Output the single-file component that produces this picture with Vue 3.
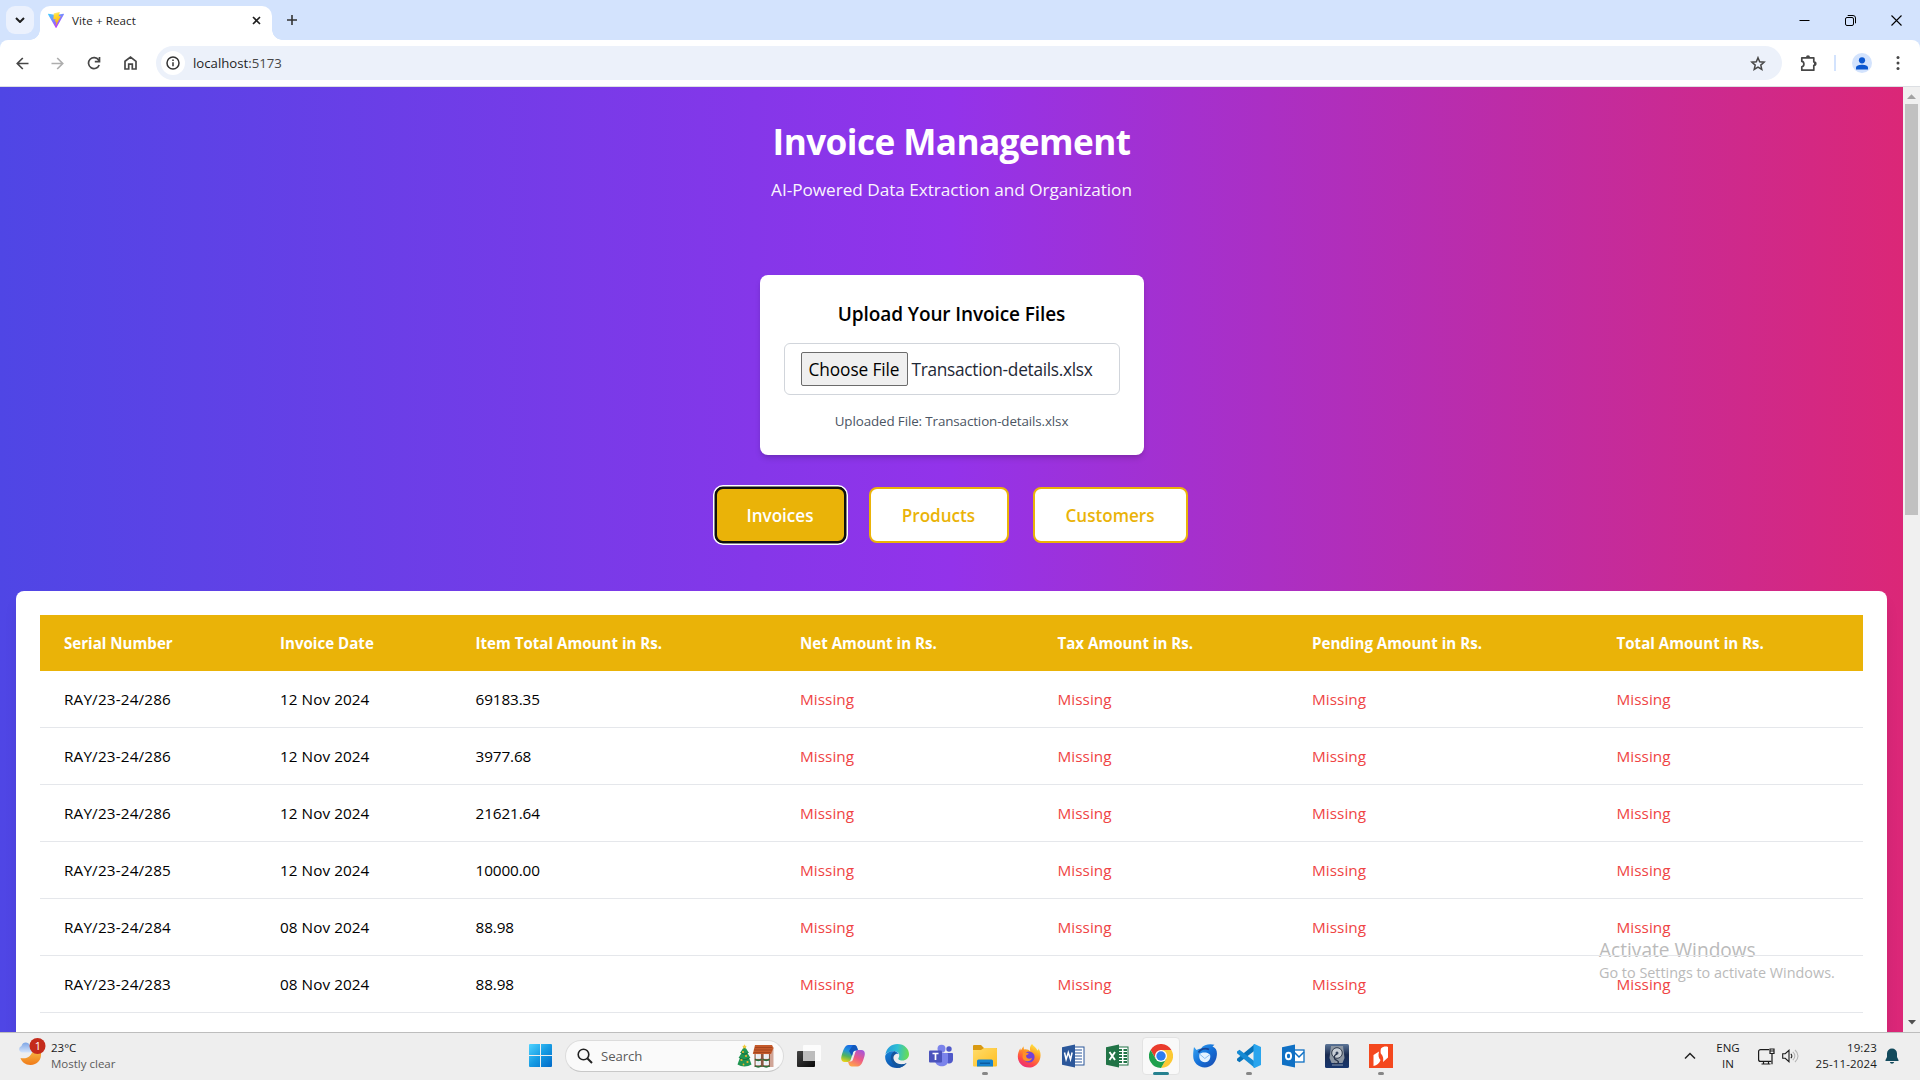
<script setup>
const columns = [
  { label: 'Serial Number', width: 216 },
  { label: 'Invoice Date', width: 195.5 },
  { label: 'Item Total Amount in Rs.', width: 324.5 },
  { label: 'Net Amount in Rs.', width: 257.5 },
  { label: 'Tax Amount in Rs.', width: 254.5 },
  { label: 'Pending Amount in Rs.', width: 304.5 },
  { label: 'Total Amount in Rs.', width: 270.5 },
]
const rows = [
  ['RAY/23-24/286', '12 Nov 2024', '69183.35'],
  ['RAY/23-24/286', '12 Nov 2024', '3977.68'],
  ['RAY/23-24/286', '12 Nov 2024', '21621.64'],
  ['RAY/23-24/285', '12 Nov 2024', '10000.00'],
  ['RAY/23-24/284', '08 Nov 2024', '88.98'],
  ['RAY/23-24/283', '08 Nov 2024', '88.98'],
]
</script>

<template>
  <div class="desktop">
    <header class="tabstrip">
      <div class="tab-search">
        <svg width="10" height="6" viewBox="0 0 10 6"><path d="M1 1l4 4 4-4" fill="none" stroke="#1f1f1f" stroke-width="2" /></svg>
      </div>
      <div class="tab">
        <svg class="favicon" width="16" height="16" viewBox="0 0 16 16">
          <defs>
            <linearGradient id="vite-a" x1="0" y1="0" x2=".6" y2="1"><stop offset="0" stop-color="#41d1ff" /><stop offset="1" stop-color="#bd34fe" /></linearGradient>
            <linearGradient id="vite-b" x1=".4" y1="0" x2=".6" y2="1"><stop offset="0" stop-color="#ffea83" /><stop offset=".2" stop-color="#ffdd35" /><stop offset="1" stop-color="#ffa800" /></linearGradient>
          </defs>
          <path d="M15.9 2.4 8.4 15.7a.4.4 0 0 1-.7 0L.1 2.4a.4.4 0 0 1 .4-.6L8 3.1l7.4-1.3a.4.4 0 0 1 .5.6z" fill="url(#vite-a)" />
          <path d="M11.5.1 6 1.2a.2.2 0 0 0-.2.2l-.4 5.8c0 .1.1.2.3.2l1.5-.3c.2 0 .3.1.3.2L7 9.5c0 .2.1.3.2.3l1-.3c.1 0 .3.1.2.3l-.7 3.5c0 .2.2.3.3.1l4.7-9.2c.1-.1-.1-.3-.2-.3l-1.6.3c-.2 0-.3-.1-.2-.2l1-3.6c.1-.2 0-.3-.2-.3z" fill="url(#vite-b)" />
        </svg>
        <span class="tab-title">Vite + React</span>
        <svg class="tab-close" width="9" height="9" viewBox="0 0 9 9"><path d="M1 1l7 7M8 1L1 8" stroke="#1f1f1f" stroke-width="1.6" /></svg>
      </div>
      <svg class="new-tab" width="12" height="12" viewBox="0 0 12 12"><path d="M6 1v10M1 6h10" stroke="#333" stroke-width="1.6" /></svg>
      <div class="window-buttons">
        <svg width="11" height="11" viewBox="0 0 11 11"><path d="M.5 5.5h10" stroke="#000" /></svg>
        <svg width="11" height="11" viewBox="0 0 11 11" fill="none" stroke="#000"><rect x=".5" y="2.5" width="8" height="8" rx="1.5" /><path d="M2.7.5H8a2.5 2.5 0 0 1 2.5 2.5v5.3" /></svg>
        <svg width="11" height="11" viewBox="0 0 11 11"><path d="M.5.5l10 10M10.500.5l-10 10" stroke="#000" stroke-width="1.1" /></svg>
      </div>
    </header>

    <div class="toolbar-wrap">
      <div class="toolbar">
        <svg class="nav back" width="13" height="13" viewBox="0 0 13 13" fill="none" stroke="#474747" stroke-width="1.7"><path d="M12.500 6.500H1.500M6.800 1L1.300 6.500l5.500 5.500" /></svg>
        <svg class="nav forward" width="13" height="13" viewBox="0 0 13 13" fill="none" stroke="#aeaeae" stroke-width="1.7"><path d="M.5 6.500h11M6.200 1l5.500 5.500L6.200 12" /></svg>
        <svg class="nav reload" width="14" height="14" viewBox="0 0 14 14" fill="none" stroke="#474747" stroke-width="1.7"><path d="M12.200 9A5.500 5.500 0 1 1 11.600 4l.8 1.200M12.500 1v4.700H7.800" /></svg>
        <svg class="nav home" width="13" height="14" viewBox="0 0 13 14" fill="none" stroke="#474747" stroke-width="1.700"><path d="M1 5.300L6.500 1.100 12 5.300V13H8.300V8.200H4.700V13H1z" /></svg>
        <div class="address">
          <span class="site-info">
            <svg width="14" height="14" viewBox="0 0 14 14" fill="none" stroke="#333" stroke-width="1.500"><circle cx="7" cy="7" r="6" /><path d="M7 6.200v4M7 3.600v1.500" /></svg>
          </span>
          <span class="url">localhost<i>:5173</i></span>
          <svg class="star" width="16" height="15" viewBox="0 0 16 15"><path d="M8 1.700l1.700 4.100 4.400.4-3.300 2.900 1 4.300L8 11.100l-3.800 2.300 1-4.300-3.300-2.900 4.400-.4z" fill="none" stroke="#474747" stroke-width="1.500" /></svg>
        </div>
        <svg class="puzzle" width="17" height="17" viewBox="0 0 17 17"><path d="M1.800 2.800h12V7c2.600-.2 2.600 3.600 0 3.400v4.800h-12v-3.400c2.800-.4 2.800-5 0-5.400z" fill="none" stroke="#474747" stroke-width="1.700" stroke-linejoin="round" /><path d="M6 2.300a2 2 0 0 1 4 0zM14 6.900a1.900 1.900 0 0 1 0 3.800z" fill="#474747" /></svg>
        <span class="separator"></span>
        <span class="avatar">
          <svg width="12" height="13" viewBox="0 0 12 13" fill="#0b57d0"><circle cx="6" cy="3.300" r="3.100" /><path d="M0 12.500v-1.900C0 8.500 3.500 7.700 6 7.700s6 .8 6 2.900v1.900z" /></svg>
        </span>
        <svg class="kebab" width="4" height="14" viewBox="0 0 4 14" fill="#474747"><circle cx="2" cy="1.600" r="1.500" /><circle cx="2" cy="7" r="1.500" /><circle cx="2" cy="12.400" r="1.500" /></svg>
      </div>
    </div>

    <div class="viewport">
      <main class="page">
        <h1>Invoice Management</h1>
        <p class="tagline">AI-Powered Data Extraction and Organization</p>

        <section class="upload">
          <h2>Upload Your Invoice Files</h2>
          <div class="file-field">
            <span class="choose">Choose File</span>
            <span class="filename">Transaction-details.xlsx</span>
          </div>
          <p class="uploaded">Uploaded File: Transaction-details.xlsx</p>
        </section>

        <nav class="views">
          <button class="view active">Invoices</button>
          <button class="view products">Products</button>
          <button class="view customers">Customers</button>
        </nav>

        <section class="panel">
          <table>
            <colgroup><col v-for="c in columns" :key="c.label" :style="{ width: c.width + 'px' }"></colgroup>
            <thead>
              <tr><th v-for="c in columns" :key="c.label">{{ c.label }}</th></tr>
            </thead>
            <tbody>
              <tr v-for="(r, i) in rows" :key="i">
                <td class="serial">{{ r[0] }}</td>
                <td class="date">{{ r[1] }}</td>
                <td class="amount">{{ r[2] }}</td>
                <td v-for="n in 4" :key="n" class="missing">Missing</td>
              </tr>
            </tbody>
          </table>
          <div class="watermark">
            <div class="wm-title">Activate Windows</div>
            <div class="wm-text">Go to Settings to activate Windows.</div>
          </div>
        </section>
      </main>
      <div class="scrollbar">
        <svg width="9" height="5" viewBox="0 0 9 5"><path d="M0 5l4.500-4.700L9 5z" fill="#a3a3a3" /></svg>
        <div class="thumb"></div>
        <svg class="down" width="8" height="5" viewBox="0 0 8 5"><path d="M0 0h8L4 4.500z" fill="#505050" /></svg>
      </div>
    </div>

    <footer class="taskbar">
      <div class="weather">
        <svg width="28" height="28" viewBox="0 0 28 28">
          <defs>
            <linearGradient id="moon" x1="0" y1="0" x2="0" y2="1"><stop offset="0" stop-color="#f7c04a" /><stop offset="1" stop-color="#f07a18" /></linearGradient>
            <linearGradient id="cloud" x1="0" y1="0" x2="0" y2="1"><stop offset="0" stop-color="#7ea6e6" /><stop offset="1" stop-color="#d5e4fa" /></linearGradient>
          </defs>
          <path d="M2.500 20C9 21.500 14 18 15 11l8 3c1 8-4 13-10.500 13-5 0-8.800-3-10-7z" fill="url(#moon)" />
          <path d="M3.500 14.500a3.400 3.400 0 0 1 0-6.500c1-4.500 7-4.500 8.500-.5 2 1 3 3 2.500 7z" fill="url(#cloud)" />
          <circle cx="19.500" cy="8" r="8" fill="#c42b1c" />
          <text x="20" y="12.200" class="badge-text" text-anchor="middle">1</text>
        </svg>
        <div class="weather-text"><span>23°C</span><span class="dim">Mostly clear</span></div>
      </div>

      <div class="apps">
        <svg class="start" width="24" height="24" viewBox="0 0 24 24">
          <defs><linearGradient id="win" x1="0" y1="0" x2="1" y2="1"><stop offset="0" stop-color="#4fd3ff" /><stop offset=".5" stop-color="#169be3" /><stop offset="1" stop-color="#0069c8" /></linearGradient></defs>
          <path d="M1 0H11V11H0V1a1 1 0 0 1 1-1zM12 0h10a1 1 0 0 1 1 1v10h-11zM0 12h11v11h-10a1 1 0 0 1-1-1zM12 12h11v10a1 1 0 0 1-1 1h-10z" fill="url(#win)" />
        </svg>
        <div class="search">
          <svg width="16" height="16" viewBox="0 0 16 16" fill="none" stroke="#222" stroke-width="1.600"><circle cx="6.500" cy="6.500" r="5.300" /><path d="M10.500 10.500l4.500 4.500" stroke-width="2" /></svg>
          <span>Search</span>
          <svg class="holiday" width="38" height="24" viewBox="0 0 38 24">
            <path d="M6 18h3v4H6z" fill="#7a4828" />
            <path d="M7.500 2l4.500 7h-1.500l3 5h-1.300l2.300 6.500c-4 2.500-10 2.500-14 0L2.800 14H1.500l3-5H3z" fill="#219653" />
            <path d="M4.500 9c2 1.500 4 1.500 6 0M2.800 14c3 2 6.500 2 9.400 0" stroke="#12693c" fill="none" />
            <path d="M7.500.2l.7 1.500 1.700.2-1.200 1.200.3 1.600-1.500-.8-1.500.8.300-1.600L5.100 1.900l1.700-.2z" fill="#f3c93b" />
            <g fill="#f4b52f"><circle cx="6" cy="8" r="1" /><circle cx="9" cy="12" r="1.100" /><circle cx="4.500" cy="16" r="1.100" /><circle cx="10.500" cy="18" r="1.100" /><circle cx="6.500" cy="20.500" r=".9" /></g>
            <path d="M17.500 9H35l1 13-2 1H17.500z" fill="#8b5642" />
            <path d="M33 9l3.500-6v20H33z" fill="#d0a597" />
            <path d="M18 1h17l1.500 3-2.500 6H15.800z" fill="#c55a2b" />
            <path d="M18 3.500h17M17 6h18M16.500 8.500h17" stroke="#963c18" stroke-width=".7" />
            <g fill="#e6edf6" stroke="#fff" stroke-width=".7"><rect x="19" y="10.500" width="4.500" height="4" /><rect x="27" y="10.500" width="4.500" height="4" /><rect x="19" y="17" width="4.500" height="4" /><rect x="27" y="17" width="4.500" height="4" /></g>
            <path d="M18 15.300c2 1.500 4.500 1.500 6.500 0M26 15.300c2 1.500 4.500 1.500 6.500 0M18 21.800c2 1.500 4.500 1.500 6.500 0M26 21.800c2 1.500 4.500 1.500 6.500 0" stroke="#28713c" stroke-width="1.300" fill="none" />
          </svg>
        </div>

        <div class="app">
          <svg width="24" height="24" viewBox="0 0 24 24">
            <defs><linearGradient id="tv" x1="0" y1="0" x2="1" y2="1"><stop offset="0" stop-color="#444" /><stop offset="1" stop-color="#090909" /></linearGradient></defs>
            <rect x="0" y="7" width="18" height="16" rx="1" fill="url(#tv)" /><rect x="6" y="1" width="18" height="16" rx="1" fill="#fff" fill-opacity=".82" /><path d="M6 7h12v10H6z" fill="#bdbdbd" />
          </svg>
        </div>
        <div class="app">
          <svg width="24" height="24" viewBox="0 0 24 24">
            <defs>
              <linearGradient id="cp-a" x1=".5" y1="0" x2=".2" y2="1"><stop offset="0" stop-color="#1768e6" /><stop offset=".35" stop-color="#2294d8" /><stop offset=".65" stop-color="#52b45c" /><stop offset="1" stop-color="#f1d513" /></linearGradient>
              <linearGradient id="cp-b" x1=".8" y1="0" x2=".3" y2="1"><stop offset="0" stop-color="#a456dc" /><stop offset=".5" stop-color="#ed5a86" /><stop offset="1" stop-color="#ffa34b" /></linearGradient>
            </defs>
            <path d="M17 6.500l-1-3.200A3 3 0 0 0 13 1H7.500C3.500 1 2 7 .5 12c-1 4 .5 6 3 6h3.300c1.500 0 2.500-1 3-2.500L12 8.500c.5-1.500 1.500-2 3-2z" fill="url(#cp-a)" />
            <path d="M12 1h1c1.500 0 2.600 1 3 2.300l1 3.200h-2c-1.500 0-2.500.5-3 2l-1 3.500-3-5z" fill="#1258bb" />
            <path d="M7 17.500l1 3.200A3 3 0 0 0 11 22.500h5.500c4 0 5.500-5.500 7-10.500 1-4-.5-6-3-6h-3.300c-1.500 0-2.500 1-3 2.500L12 15.500c-.5 1.500-1.500 2-3 2z" fill="url(#cp-b)" />
          </svg>
        </div>
        <div class="app">
          <svg width="24" height="24" viewBox="0 0 24 24">
            <defs>
              <linearGradient id="ed-a" x1="0" y1=".3" x2="1" y2=".4"><stop offset="0" stop-color="#2499dc" /><stop offset=".5" stop-color="#2ebfd3" /><stop offset="1" stop-color="#6bdd51" /></linearGradient>
              <linearGradient id="ed-b" x1="0" y1="0" x2=".5" y2="1"><stop offset="0" stop-color="#1683da" /><stop offset="1" stop-color="#0c4ea7" /></linearGradient>
            </defs>
            <path d="M.4 10.500C1.500 4 6.500 0 12.300 0 19.500 0 24 5 24 10c0 4-3 6.500-6.600 6.500-3.500 0-4.500-1.300-4-2.200 2.200-3.300.2-7-3.900-7C5 7.300 1.500 9 .4 10.500z" fill="url(#ed-a)" />
            <path d="M.2 12C1 8.500 5.500 6.800 9.500 7.300c2 .2 3.800 1.500 4.200 3-5-2-7.500 3-4.700 7 3.200 4.200 9 4.200 12.700 1.700C19 22.500 15.500 24 12 24 5 24-.4 18.500.2 12z" fill="url(#ed-b)" />
            <path d="M9.500 7.300C5.600 9.500 5 14 7 18c1.600 3.300 4.500 5 7.300 5.700 3-.6 5.500-2.500 7.400-4.700-4.200 2.200-9.700 1.500-12.200-2-2-2.800-1-6.400 2-7.200z" fill="#15569c" />
          </svg>
        </div>
        <div class="app">
          <svg width="24" height="24" viewBox="0 0 24 24">
            <circle cx="20" cy="5" r="2.700" fill="#5059c9" /><path d="M17 9h6a1 1 0 0 1 1 1v5.500c0 5-6 5-7 2z" fill="#5059c9" />
            <circle cx="12.500" cy="4.800" r="4" fill="#7b83eb" /><path d="M7 9h11a1 1 0 0 1 1 1v7c0 7-12 7-13 0z" fill="#7b83eb" />
            <rect y="6.500" width="13" height="12" rx="1" fill="#4b53bc" /><path d="M3.500 9.500h6M6.500 9.500v6.500" stroke="#fff" stroke-width="1.700" />
          </svg>
        </div>
        <div class="app running">
          <svg width="24" height="24" viewBox="0 0 24 24">
            <defs><linearGradient id="fold" x1="0" y1="0" x2="1" y2="1"><stop offset="0" stop-color="#ffdc6a" /><stop offset="1" stop-color="#ffbe22" /></linearGradient></defs>
            <path d="M0 2a1 1 0 0 1 1-1h7l3 3h12a1 1 0 0 1 1 1v8H0z" fill="#d99a12" /><path d="M0 6h8l3-2h12a1 1 0 0 1 1 1v16.500a1 1 0 0 1-1 1H1a1 1 0 0 1-1-1z" fill="url(#fold)" /><path d="M4 22.500V17a1.500 1.500 0 0 1 1.500-1.500h13A1.500 1.500 0 0 1 20 17v5.500z" fill="#1582cf" /><path d="M7 18.500h10v1.500H7z" fill="#0a5ba0" />
          </svg>
        </div>
        <div class="app">
          <svg width="24" height="24" viewBox="0 0 24 24">
            <defs>
              <linearGradient id="ff" x1=".8" y1="0" x2=".3" y2="1"><stop offset="0" stop-color="#fff044" /><stop offset=".4" stop-color="#ff9a24" /><stop offset=".75" stop-color="#ff4a48" /><stop offset="1" stop-color="#e92b7c" /></linearGradient>
            </defs>
            <path d="M15 0c2 2.500 4 3.500 5.500 6.500 1-.5 1-1.500.8-2.200 2.200 3 2.700 6 2 9.500C22 20 17.500 23.600 12 23.600 5.500 23.600.8 18.500.8 12.500c0-3 1-5.700 2.500-8.200l.5 2.200L6.500 2.200 7 5.500c2.500-.6 5 .3 6.300 1.800C12.500 4.500 13 2 15 0z" fill="url(#ff)" />
            <circle cx="12" cy="13" r="5.600" fill="#7541d7" /><path d="M6 8c2.500 0 4 .5 6 1.700L9 11.500c.2 3 3 4.200 6 2.500-1 4.500-9 4.500-9.500-1z" fill="#ff9127" />
          </svg>
        </div>
        <div class="app">
          <svg width="24" height="24" viewBox="0 0 24 24">
            <rect x="12" y="3" width="11" height="18" fill="#fff" stroke="#2b579a" /><path d="M14 6h7M14 9h7M14 12h7M14 15h7M14 18h7" stroke="#2b579a" stroke-width="1.200" /><path d="M1 3.200L14 .5v23L1 20.800z" fill="#2b579a" /><path d="M3.500 8.500l1.600 7L7.300 8.500l2.200 7 1.600-7" fill="none" stroke="#fff" stroke-width="1.500" />
          </svg>
        </div>
        <div class="app">
          <svg width="24" height="24" viewBox="0 0 24 24">
            <rect x="12" y="3" width="11" height="18" fill="#fff" stroke="#217346" /><path d="M14 6h3M14 9h3M14 12h3M14 15h3M14 18h3M18.500 6h3.500M18.500 9h3.500M18.500 12h3.500M18.500 15h3.500M18.500 18h3.500" stroke="#217346" stroke-width="1.800" /><path d="M1 3.200L14 .5v23L1 20.800z" fill="#217346" /><path d="M4.500 8l5.500 8M10 8l-5.500 8" stroke="#fff" stroke-width="1.900" />
          </svg>
        </div>
        <div class="app current">
          <svg width="24" height="24" viewBox="0 0 24 24">
            <circle cx="12" cy="12" r="12" fill="#fff" />
            <path d="M12 6h10.400A12 12 0 0 0 1.600 6l5.200 9z" fill="#ea3c2d" />
            <path d="M12 6h10.400A12 12 0 0 1 12 24l5.200-9z" fill="#fcc934" />
            <path d="M6.800 15L1.600 6A12 12 0 0 0 12 24l5.200-9z" fill="#1fa04d" />
            <circle cx="12" cy="12" r="6" fill="#fff" /><circle cx="12" cy="12" r="4.700" fill="#2d7df0" />
          </svg>
        </div>
        <div class="app">
          <svg width="24" height="24" viewBox="0 0 24 24">
            <defs><linearGradient id="tb" x1="0" y1="0" x2="1" y2="1"><stop offset="0" stop-color="#3aa8f5" /><stop offset=".5" stop-color="#1570d8" /><stop offset="1" stop-color="#1b49ad" /></linearGradient></defs>
            <path d="M1 3l2.500 3C5 5 6.500 4.500 8 4.500 10.500.5 17-.5 21.500.8L19.500 2.500c4 1.500 4.800 5 4.300 9-.7 7-5.500 12-12 12S0 18.500.2 12C.2 8 .5 6 1 3z" fill="url(#tb)" />
            <path d="M6.500 10c1.500-2 8-2.500 10.500.5 1 3-.5 7.500-5 7.800-4.500 0-6.500-4.300-5.500-8.300z" fill="#e5f3ff" /><path d="M6.500 10l5.300 4.500 5.200-4" fill="none" stroke="#8bbcf0" /><path d="M5.500 8.500c2-3.500 6.500-5 10.500-3" stroke="#174798" stroke-width="1.800" fill="none" />
          </svg>
        </div>
        <div class="app running">
          <svg width="24" height="24" viewBox="0 0 24 24">
            <path d="M17.500.2v6.500L2.500 18.200 0 16.500v-1.700z" fill="#0872b8" /><path d="M17.500 23.800v-6.500L2.500 5.800 0 7.500v1.700z" fill="#168bd4" /><path d="M17.500 0L24 3v18l-6.500 3c-.8 0-1-.5-1-1V1c0-.5.200-1 1-1z" fill="#2aa5ee" />
          </svg>
        </div>
        <div class="app">
          <svg width="24" height="24" viewBox="0 0 24 24">
            <rect x="12" y="6" width="11" height="12" fill="#fff" stroke="#0f70c4" stroke-width="1.300" /><path d="M13 8l5 5 5-5" fill="none" stroke="#0f70c4" stroke-width="1.500" /><path d="M1 3.200L14 .5v23L1 20.800z" fill="#0f70c4" /><ellipse cx="7.500" cy="12" rx="2.600" ry="3.300" fill="none" stroke="#fff" stroke-width="1.900" />
          </svg>
        </div>
        <div class="app">
          <svg width="24" height="24" viewBox="0 0 24 24">
            <defs><linearGradient id="dk" x1="0" y1="0" x2="0" y2="1"><stop offset="0" stop-color="#5d7698" /><stop offset=".45" stop-color="#1a2c51" /><stop offset="1" stop-color="#17366e" /></linearGradient></defs>
            <rect width="24" height="24" rx="1.500" fill="url(#dk)" /><path d="M6 2h12l1.500 12-2 5h-11l-2-5z" fill="#8d97a3" /><circle cx="12" cy="9" r="5.300" fill="#c9cfd6" stroke="#303b4d" /><circle cx="12" cy="9" r="1.500" fill="#38465e" /><path d="M12 10c-4 2-3.500 5 0 6.500 3 1.500 1 4-3 3" stroke="#26324a" fill="none" stroke-width="1.300" /><path d="M7 21h11" stroke="#8998ae" />
          </svg>
        </div>
        <div class="app running">
          <svg width="24" height="24" viewBox="0 0 24 24">
            <rect width="24" height="24" fill="#f4481e" /><path d="M4.500 11L10 7.500c-1 4-.5 6.500 1.500 8.500-1 3-3.500 5.500-7 6zM12 4.500c2-2 5-2.500 7-1.500v10.500L14 18c.8-4 0-6-2.200-8.500-.3-1.500-.3-3.500.2-5z" fill="#fff" />
          </svg>
        </div>
      </div>

      <div class="tray">
        <svg class="chevron" width="12" height="8" viewBox="0 0 12 8"><path d="M1 6.500l5-5 5 5" fill="none" stroke="#222" stroke-width="1.500" /></svg>
        <div class="lang"><span>ENG</span><span>IN</span></div>
        <svg class="network" width="17" height="17" viewBox="0 0 17 17" fill="none" stroke="#1a1a1a" stroke-width="1.200"><path d="M11 1.600H2.600a2 2 0 0 0-2 2v7.800a2 2 0 0 0 2 2h10.800M5.500 13.500v2.500M10.500 13.500v2.500M3.500 16h9" /><path d="M12 1h4v4.500h-4zM14 5.500v10.800M12 3h4" /></svg>
        <svg class="volume" width="17" height="14" viewBox="0 0 17 14" fill="none" stroke="#1a1a1a" stroke-width="1.100"><path d="M.7 4.700h2.500L7 1.300v11.400L3.200 9.300H.7z" /><path d="M8.800 4.800c1.400 1.200 1.400 3.200 0 4.400" /><path d="M10.800 2.800c2.700 2.400 2.700 6 0 8.400M13 1c4 3.500 4 8.500 0 12" stroke="#b5b5b5" /></svg>
        <div class="clock"><span>19:23</span><span>25-11-2024</span></div>
        <svg class="bell" width="14" height="16" viewBox="0 0 14 16" fill="#134a5c"><path d="M7 .5a5 5 0 0 1 5 5V9l1.500 3v1H.5v-1L2 9V5.500a5 5 0 0 1 5-5zM4.800 14h4.400a2.300 2.300 0 0 1-4.400 0z" /></svg>
      </div>
    </footer>
  </div>
</template>

<style>
html,
body {
  margin: 0;
  overflow: hidden;
}
</style>

<style scoped>
* {
  box-sizing: border-box;
}
.desktop {
  width: 1920px;
  height: 1080px;
  display: flex;
  flex-direction: column;
  overflow: hidden;
  font-family: "Open Sans", "Noto Sans", sans-serif;
  color: #000;
}
svg {
  display: block;
  flex: none;
}

/* Tab strip */
.tabstrip {
  height: 40px;
  flex: none;
  background: #d3e3fd;
  display: flex;
  align-items: center;
  padding-left: 6px;
}
.tab-search {
  width: 28px;
  height: 28px;
  border-radius: 9px;
  background: #ebf1fd;
  display: grid;
  place-items: center;
}
.tab {
  position: relative;
  width: 232px;
  height: 34px;
  margin: 6px 0 0 6px;
  padding: 0 11px 6px 8px;
  border-radius: 10px 10px 0 0;
  background: #fff;
  display: flex;
  align-items: center;
}
.tab::before,
.tab::after {
  content: "";
  position: absolute;
  bottom: 0;
  width: 10px;
  height: 10px;
}
.tab::before {
  left: -10px;
  background: radial-gradient(circle at 0 0, transparent 9.5px, #fff 10px);
}
.tab::after {
  right: -10px;
  background: radial-gradient(circle at 100% 0, transparent 9.5px, #fff 10px);
}
.tab-title {
  margin: 2px 0 0 8px;
  font-size: 11.6px;
  letter-spacing: 0.08px;
  line-height: 16px;
  color: #1f1f1f;
}
.tab-close {
  margin-left: auto;
}
.new-tab {
  margin-left: 14px;
}
.window-buttons {
  margin-left: auto;
  margin-right: 18px;
  display: flex;
  gap: 35px;
}

/* Toolbar */
.toolbar-wrap {
  flex: none;
  background: #d3e3fd;
}
.toolbar {
  height: 47px;
  background: #fff;
  border-bottom: 1px solid #dcdfe3;
  border-radius: 8px 8px 0 0;
  display: flex;
  align-items: center;
  padding-left: 16px;
}
.forward {
  margin-left: 22px;
}
.reload {
  margin-left: 23px;
}
.home {
  margin-left: 23px;
}
.address {
  width: 1626px;
  height: 34px;
  margin-left: 19px;
  border-radius: 17px;
  background: #ecf1fa;
  display: flex;
  align-items: center;
  padding: 0 16px 0 5px;
}
.site-info {
  width: 24px;
  height: 24px;
  border-radius: 50%;
  background: #fff;
  display: grid;
  place-items: center;
}
.url {
  margin-left: 8px;
  font-size: 13.2px;
  line-height: 18px;
  color: #1f1f1f;
}
.url i {
  font-style: normal;
  color: #474747;
}
.star {
  margin-left: auto;
}
.puzzle {
  margin-left: 18px;
}
.separator {
  width: 2px;
  height: 16px;
  margin-left: 17px;
  background: #d3e3fd;
}
.avatar {
  width: 20px;
  height: 20px;
  margin-left: 16px;
  border-radius: 50%;
  background: #d3e3fd;
  display: grid;
  place-items: center;
}
.kebab {
  margin-left: 24px;
}

/* Page */
.viewport {
  height: 945px;
  flex: none;
  display: flex;
  overflow: hidden;
}
.page {
  width: 1903px;
  height: 945px;
  overflow: hidden;
  padding: 32px 16px 0;
  background: linear-gradient(to right, #4f46e5, #9333ea, #db2777);
  display: flex;
  flex-direction: column;
  align-items: center;
}
h1 {
  margin: 2px 0 0;
  font-size: 35.2px;
  letter-spacing: -0.6px;
  line-height: 40px;
  font-weight: 700;
  color: #fff;
}
.tagline {
  margin: 15px 0 0;
  font-size: 17.2px;
  letter-spacing: -0.03px;
  line-height: 28px;
  color: #fff;
  opacity: 0.95;
}
.upload {
  width: 384px;
  height: 180px;
  flex: none;
  margin-top: 71px;
  padding: 24px;
  border-radius: 8px;
  background: #fff;
  box-shadow: 0 4px 6px -1px rgba(0, 0, 0, 0.15), 0 2px 4px -2px rgba(0, 0, 0, 0.12);
  display: flex;
  flex-direction: column;
  align-items: center;
}
h2 {
  margin: 1px 0 15px;
  font-size: 19px;
  letter-spacing: -0.1px;
  line-height: 28px;
  font-weight: 600;
}
.file-field {
  width: 336px;
  height: 52px;
  flex: none;
  border: 1px solid #d1d5db;
  border-radius: 6px;
  padding-left: 16px;
  display: flex;
  align-items: center;
  font-size: 17.3px;
  line-height: 28px;
}
.choose {
  width: 107px;
  height: 34px;
  border: 1px solid #6b6b6b;
  border-radius: 2px;
  background: #efefef;
  text-align: center;
  line-height: 34px;
  letter-spacing: -0.1px;
}
.filename {
  margin: 2px 0 0 4px;
  color: #1f2937;
  letter-spacing: -0.3px;
}
.uploaded {
  margin: 16px 0 0;
  font-size: 13.4px;
  letter-spacing: -0.12px;
  line-height: 20px;
  color: #4b5563;
}
.views {
  display: flex;
  gap: 24px;
  margin: 32px 1px 0 0;
}
.view {
  width: 131px;
  height: 56px;
  padding: 1px 0 0;
  border: 2px solid #eab308;
  border-radius: 8px;
  background: #fff;
  color: #eab308;
  font: 600 17.1px/28px "Open Sans", "Noto Sans", sans-serif;
}
.active {
  background: #eab308;
  color: #fff;
  border-color: #101010;
  box-shadow: 0 0 0 0.5px #101010, 0 0 0 2px #fff;
}
.products {
  width: 140px;
  margin-left: -1px;
}
.customers {
  width: 155px;
}
.panel {
  position: relative;
  isolation: isolate;
  width: 1871px;
  height: 480px;
  flex: none;
  margin-top: 48px;
  padding: 24px;
  border-radius: 8px;
  background: #fff;
  box-shadow: 0 10px 15px -3px rgba(0, 0, 0, 0.1);
}
table {
  width: 1823px;
  table-layout: fixed;
  border-collapse: separate;
  border-spacing: 0;
  font-size: 15.3px;
  line-height: 24px;
}
th {
  height: 56px;
  padding: 0 24px;
  background: #eab308;
  color: #fff;
  text-align: left;
  font-size: 15.1px;
  font-weight: 700;
  white-space: nowrap;
}
td {
  height: 57px;
  padding: 0 24px;
  border-bottom: 1px solid #e5e7eb;
}
.serial {
  letter-spacing: 0.15px;
}
.date {
  letter-spacing: 0.05px;
}
.amount {
  letter-spacing: -0.12px;
}
.missing {
  color: #ef4444;
  letter-spacing: 0.05px;
}
.watermark {
  position: absolute;
  z-index: -1;
  left: 1583px;
  top: 345px;
  color: #bababa;
  white-space: nowrap;
}
.wm-title {
  font-size: 19.1px;
  line-height: 28px;
}
.wm-text {
  margin-top: -1px;
  font-size: 14.4px;
  line-height: 20px;
}

.scrollbar {
  width: 17px;
  background: #f0f0f0;
  display: flex;
  flex-direction: column;
  align-items: center;
  padding: 7px 0 7px;
}
.thumb {
  width: 13px;
  height: 411px;
  margin-top: 5px;
  background: #c1c1c1;
}
.down {
  margin-top: auto;
}

/* Taskbar */
.taskbar {
  height: 48px;
  flex: none;
  border-top: 1px solid #bdbdbd;
  background: #eee;
  display: flex;
  align-items: center;
  padding-bottom: 1px;
}
.weather {
  width: 529px;
  padding-left: 18px;
  display: flex;
  align-items: center;
}
.weather > svg {
  margin-top: -8px;
}
.badge-text {
  font-size: 11px;
  fill: #fff;
}
.weather-text {
  margin-left: 5px;
}
.weather-text,
.lang,
.clock {
  display: flex;
  flex-direction: column;
  padding-bottom: 1px;
  font-size: 11.5px;
  line-height: 16px;
  color: #1a1a1a;
}
.weather-text .dim {
  color: #5b5b5b;
}
.apps {
  display: flex;
  align-items: center;
}
.search {
  width: 219px;
  height: 32px;
  margin: 0 3px 0 12px;
  padding: 0 8px 0 11px;
  border: 1px solid #dcdcdc;
  border-bottom-color: #c8c8c8;
  border-radius: 16px;
  background: #fafafa;
  display: flex;
  align-items: center;
  font-size: 13.2px;
  color: #5b5b5b;
}
.search span {
  margin: 0 0 1px 8px;
  letter-spacing: -0.1px;
}
.holiday {
  margin-left: auto;
}
.app {
  position: relative;
  width: 44px;
  height: 46px;
  display: grid;
  place-items: center;
}
.app svg {
  position: relative;
}
.running::after {
  content: "";
  position: absolute;
  left: 19px;
  bottom: 4px;
  width: 6px;
  height: 3px;
  border-radius: 2px;
  background: #868686;
}
.current::before {
  content: "";
  position: absolute;
  inset: 4px 3px;
  border: 1px solid #e3e3e3;
  border-radius: 4px;
  background: #f9f9f9;
}
.current::after {
  content: "";
  position: absolute;
  left: 14px;
  bottom: 4px;
  width: 16px;
  height: 3px;
  border-radius: 2px;
  background: #26818f;
}
.tray {
  margin-left: auto;
  margin-right: 21px;
  display: flex;
  align-items: center;
}
.lang {
  width: 36px;
  margin-left: 14px;
  align-items: center;
}
.network {
  margin-left: 12px;
}
.volume {
  margin-left: 7px;
}
.clock {
  width: 70px;
  margin-left: 8px;
  align-items: flex-end;
  letter-spacing: 0.15px;
}
.bell {
  margin-left: 8px;
}
</style>
